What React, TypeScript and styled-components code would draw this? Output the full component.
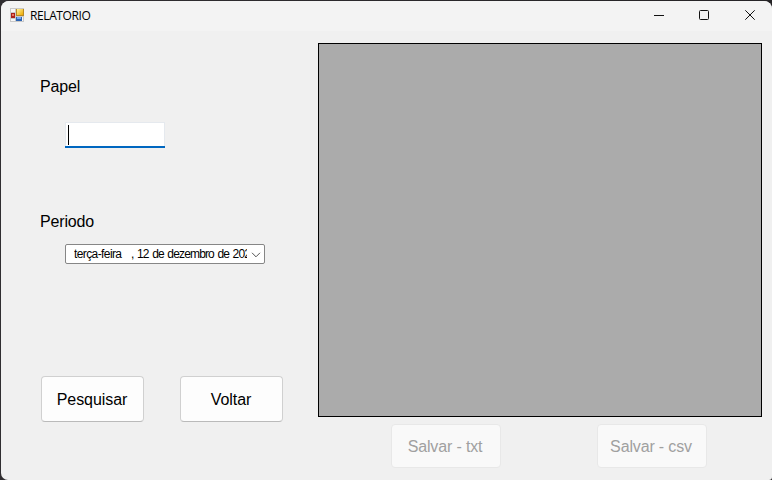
import React from "react";
import styled, { createGlobalStyle } from "styled-components";

const GlobalStyle = createGlobalStyle`
  * { box-sizing: border-box; }
  body { margin: 0; background: #19181b; overflow: hidden; }
  button, input { font: inherit; }
`;

const Frame = styled.div`
  width: 772px;
  height: 480px;
  padding: 1px 0 0 1px;
  background: linear-gradient(90deg, #302e31, #252326);
`;

const Window = styled.main`
  width: 771px;
  height: 479px;
  overflow: hidden;
  border-radius: 8px 8px 3px 7px;
  background: #f0f0f0;
  color: #000;
  font-family: "Liberation Sans", Arial, sans-serif;
  font-size: 16px;
`;

const TitleBar = styled.header`
  display: flex;
  align-items: center;
  height: 30px;
  padding-left: 9px;
  background: #f3f3f3;
`;

const AppIcon = styled.svg`
  width: 14px;
  height: 14px;
  margin-bottom: 2px;
`;

const Title = styled.span`
  flex: 1;
  padding-left: 6px;
  font: 12px/16px "Open Sans", sans-serif;
  letter-spacing: -0.4px;
`;

const WindowControl = styled.button<{ $width: number }>`
  display: flex;
  align-items: center;
  width: ${(p) => p.$width}px;
  height: 30px;
  padding: 0 0 0 17px;
  border: 0;
  background: transparent;

  svg { display: block; flex: none; margin-bottom: 2px; }
`;

const Content = styled.div`
  display: grid;
  grid-template-columns: 278px 444px;
  padding: 12px 0 0 39px;
`;

const Filters = styled.section`
  display: flex;
  flex-direction: column;
  align-items: flex-start;
`;

const Label = styled.label<{ $gap: number }>`
  margin-top: ${(p) => p.$gap}px;
  line-height: 20px;
  letter-spacing: -0.15px;
`;

const Field = styled.div`
  width: 100px;
  height: 26px;
  margin: 25px 0 0 25px;
  background: #0067c0;
`;

const FieldSurface = styled.div`
  height: 24px;
  padding: 2px;
  border: solid #e5e9ee;
  border-width: 1px 1px 0;
  background: #fff;
`;

const Caret = styled.div`
  width: 1px;
  height: 20px;
  background: #000;
`;

const DateField = styled.div`
  display: flex;
  align-items: center;
  width: 200px;
  height: 20px;
  margin: 12px 0 0 25px;
  padding-left: 8px;
  border: 1px solid #868686;
  border-radius: 2px;
  background: #fff;
`;

const DateText = styled.div`
  display: flex;
  width: 173px;
  overflow: hidden;
  white-space: pre;
  font-size: 12px;
  line-height: 16px;
`;

const Weekday = styled.span`
  flex: 0 0 57px;
  letter-spacing: -0.6px;
`;

const DateValue = styled.span`
  flex: none;
  letter-spacing: -0.84px;
  word-spacing: 1px;
`;

const Chevron = styled.svg`
  width: 10px;
  height: 6px;
  margin: 2px 0 0 4px;
`;

const Actions = styled.div`
  display: flex;
  gap: 36px;
  margin: 112px 0 0 1px;
`;

const ActionButton = styled.button`
  width: 103px;
  height: 46px;
  padding: 1px 1px 0 0;
  border: 1px solid #d0d0d0;
  border-bottom-color: #bababa;
  border-radius: 4px;
  background: #fdfdfd;
  color: #000;
  letter-spacing: -0.08px;
`;

const ExportButton = styled(ActionButton)`
  width: 110px;
  height: 44px;
  padding: 2px 2px 0 0;
  border-color: #e8e8e8;
  background: #f9f9f9;
  color: #a0a0a0;
  letter-spacing: -0.15px;
`;

const Results = styled.section`
  display: flex;
  flex-direction: column;
`;

const DataGrid = styled.div`
  height: 374px;
  border: 1px solid #000;
  background: #ababab;
`;

const ExportActions = styled.div`
  display: flex;
  gap: 96px;
  padding: 7px 0 0 73px;
`;

export default function App() {
  return (
    <>
      <GlobalStyle />
      <Frame>
        <Window>
          <TitleBar>
            <AppIcon viewBox="0 0 14 14">
              <defs>
                <linearGradient id="gold" x2="1" y2="1">
                  <stop stopColor="#fff3a0" />
                  <stop offset="1" stopColor="#eda900" />
                </linearGradient>
              </defs>
              <path fill="#c9c9c9" d="M0 0h14v14H0z" />
              <path fill="#f7f7f7" d="M1 1h4v3H1zM1 11h4v2H1zM12 9h1v4h-1z" />
              <path fill="#b98a24" d="M6 1h8v7H6z" />
              <path fill="url(#gold)" d="M7 1h6v6H7z" />
              <path fill="#aa211b" d="M1 5h4v5H1z" />
              <path fill="#eb7562" d="M2 6h2v2H2z" />
              <path fill="#2d64b3" d="M6 9h6v4H6z" />
              <path fill="#77a9ef" d="M7 9h4v2H7z" />
            </AppIcon>
            <Title>RELATORIO</Title>
            <WindowControl $width={45} aria-label="Minimizar">
              <svg width="10" height="10" fill="none" stroke="#111"><path d="M0 5.5h10" /></svg>
            </WindowControl>
            <WindowControl $width={46} aria-label="Maximizar">
              <svg width="10" height="10" fill="none" stroke="#111"><rect x=".5" y=".5" width="9" height="9" rx="1" /></svg>
            </WindowControl>
            <WindowControl $width={44} aria-label="Fechar">
              <svg width="10" height="10" fill="none" stroke="#111"><path d="m.3.3 9.4 9.4M9.7.3.3 9.7" /></svg>
            </WindowControl>
          </TitleBar>
          <Content>
            <Filters>
              <Label $gap={34}>Papel</Label>
              <Field><FieldSurface><Caret /></FieldSurface></Field>
              <Label $gap={64}>Periodo</Label>
              <DateField>
                <DateText>
                  <Weekday>terça-feira</Weekday>
                  <DateValue>, 12 de dezembro de 2023</DateValue>
                </DateText>
                <Chevron viewBox="0 0 10 6" fill="none" stroke="#555"><path d="m1 .8 4 4 4-4" /></Chevron>
              </DateField>
              <Actions>
                <ActionButton>Pesquisar</ActionButton>
                <ActionButton>Voltar</ActionButton>
              </Actions>
            </Filters>
            <Results>
              <DataGrid />
              <ExportActions>
                <ExportButton disabled>Salvar - txt</ExportButton>
                <ExportButton disabled>Salvar - csv</ExportButton>
              </ExportActions>
            </Results>
          </Content>
        </Window>
      </Frame>
    </>
  );
}
